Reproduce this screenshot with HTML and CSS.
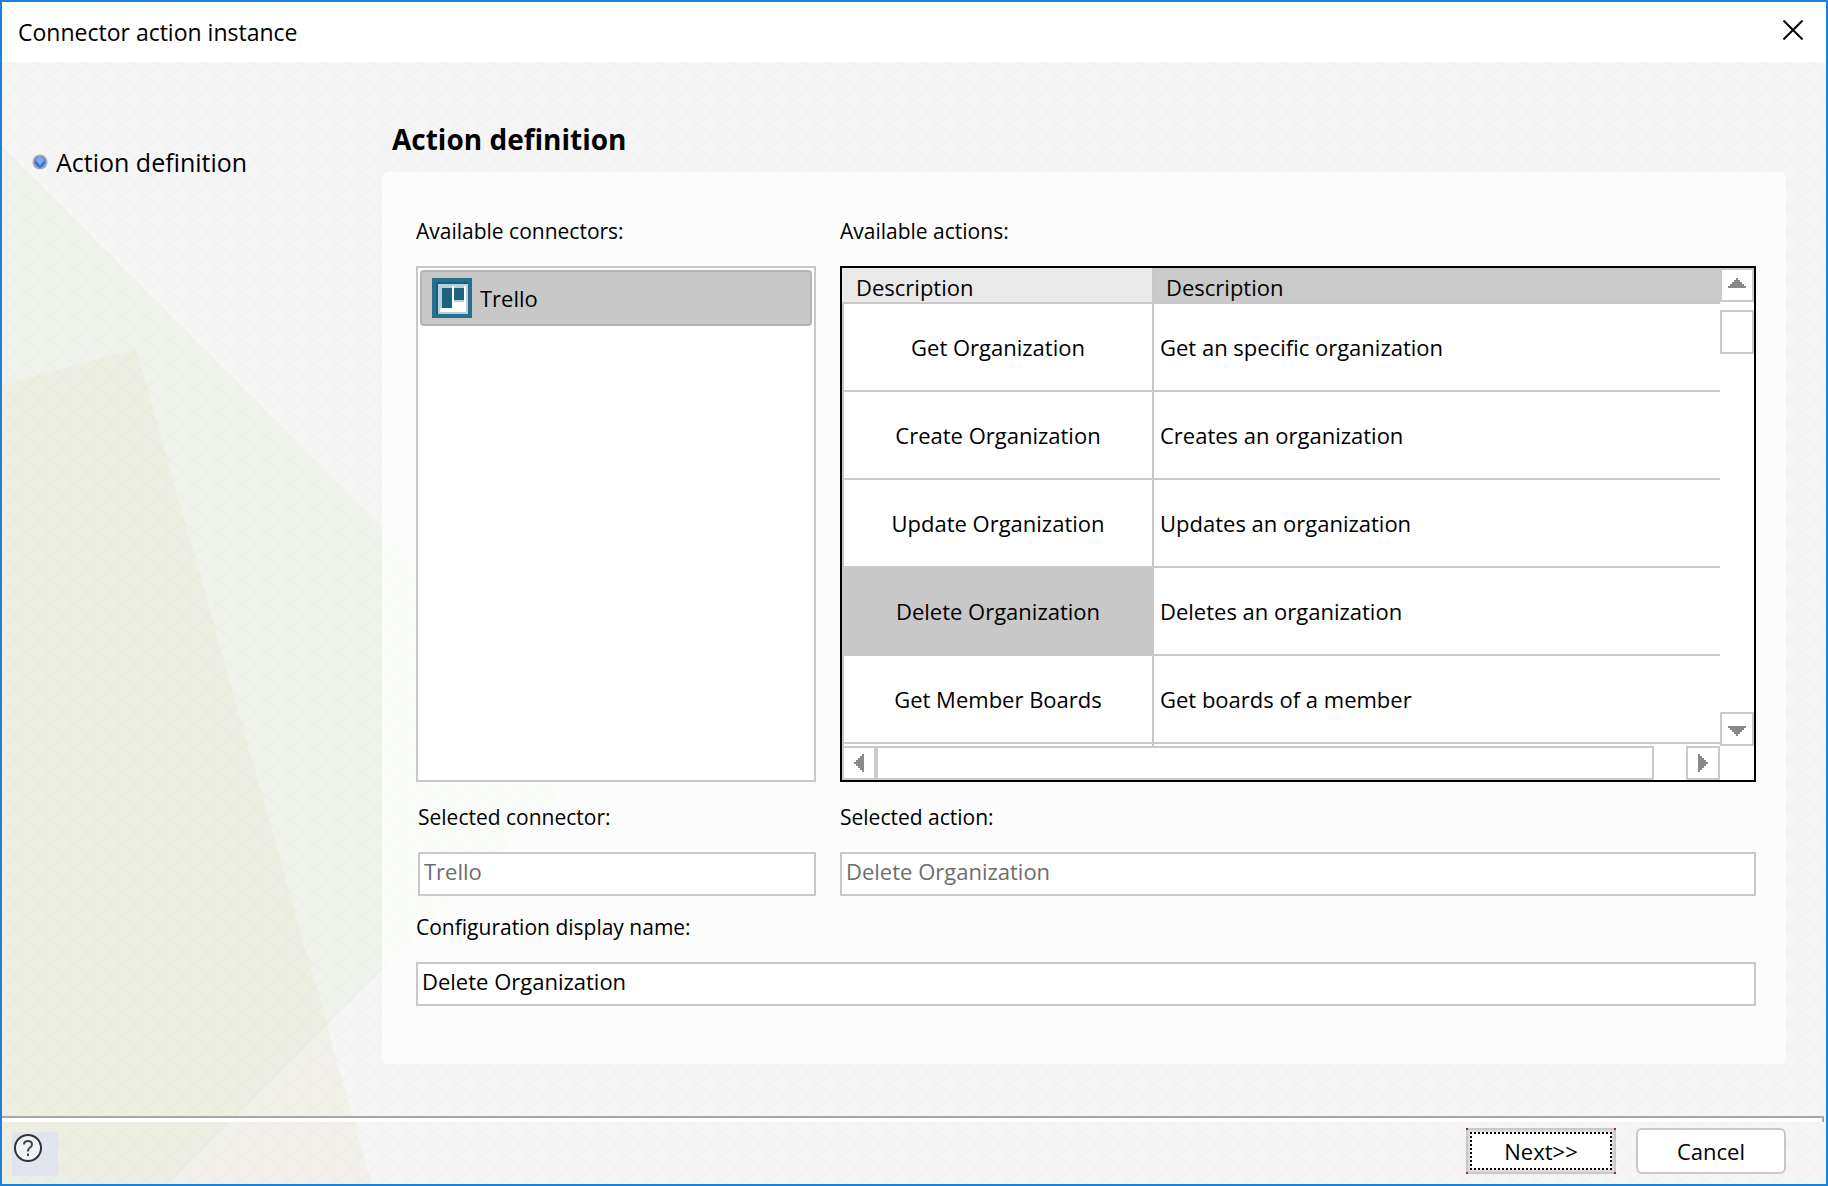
FILE: index.html
```html
<!DOCTYPE html>
<html lang="en">
<head>
<meta charset="utf-8">
<title>Connector action instance</title>
<link rel="stylesheet" href="styles.css">
</head>
<body>
<div class="dialog" role="dialog" aria-labelledby="dialog-title">
  <header class="titlebar">
    <h1 class="titlebar-text" id="dialog-title">Connector action instance</h1>
    <button class="close" type="button" aria-label="Close">
      <svg width="20" height="20" viewBox="0 0 20 20"><path d="M0.5 0.5 19.5 19.5M19.5 0.5 0.5 19.5" stroke="#000" stroke-width="2" fill="none"/></svg>
    </button>
  </header>

  <div class="workspace">
    <svg class="backdrop" aria-hidden="true">
      <defs>
        <pattern id="lattice" x="12" y="2" width="24" height="24" patternUnits="userSpaceOnUse">
          <path d="M0 0 24 24M24 0 0 24" stroke="#000" stroke-opacity="0.012" stroke-width="2" fill="none"/>
        </pattern>
      </defs>
      <polygon points="0,85 600,688 0,1288" fill="#eff3eb"/>
      <polygon points="0,323 134,287 398,1222 0,1222" fill="#e0e3b8" fill-opacity="0.2"/>
      <rect width="100%" height="100%" fill="url(#lattice)"/>
    </svg>

    <div class="content">
      <nav class="steps" aria-label="Steps">
        <ol class="step-list">
          <li class="step" aria-current="step">
            <svg width="16" height="16" viewBox="0 0 16 16" aria-hidden="true">
              <circle cx="8" cy="8" r="7.500" fill="#a3a7ae"/>
              <circle cx="8" cy="8" r="5.500" fill="#5b86cc"/>
              <path d="M2 8h12L8 14z" fill="#1f74d6"/>
              <path d="M8 2 12 6 8 12 4 6z" fill="#86a6ee"/>
            </svg>
            <span>Action definition</span>
          </li>
        </ol>
      </nav>

      <main class="main">
        <h2 class="heading">Action definition</h2>
        <form class="panel" id="action-form">
          <section class="field">
            <h3 class="label" id="connectors-label">Available connectors:</h3>
            <ul class="connector-list" role="listbox" aria-labelledby="connectors-label">
              <li class="connector" role="option" aria-selected="true">
                <svg width="40" height="40" viewBox="0 0 40 40" aria-hidden="true">
                  <rect width="40" height="40" fill="#266f8f"/>
                  <rect x="4" y="4" width="32" height="32" fill="#175f80"/>
                  <rect x="6" y="6" width="30" height="30" fill="#b9d0da"/>
                  <rect x="8" y="8" width="26" height="26" fill="#fff"/>
                  <rect x="8" y="8" width="12" height="22" fill="#b9d0da"/>
                  <rect x="10" y="10" width="10" height="20" fill="#1b6283"/>
                  <rect x="22" y="8" width="10" height="16" fill="#b9d0da"/>
                  <rect x="22" y="10" width="10" height="12" fill="#1b6283"/>
                </svg>
                <span>Trello</span>
              </li>
            </ul>
          </section>

          <section class="field">
            <h3 class="label" id="actions-label">Available actions:</h3>
            <div class="grid-box">
              <div class="table-view">
                <table class="actions" aria-labelledby="actions-label">
                  <thead>
                    <tr><th class="name-col" scope="col">Description</th><th class="sorted" scope="col">Description</th></tr>
                  </thead>
                  <tbody>
                    <tr><td>Get Organization</td><td>Get an specific organization</td></tr>
                    <tr><td>Create Organization</td><td>Creates an organization</td></tr>
                    <tr><td>Update Organization</td><td>Updates an organization</td></tr>
                    <tr><td class="selected">Delete Organization</td><td>Deletes an organization</td></tr>
                    <tr><td>Get Member Boards</td><td>Get boards of a member</td></tr>
                    <tr><td></td><td></td></tr>
                  </tbody>
                </table>
              </div>
              <div class="scroll-v">
                <button class="scroll-button scroll-up" type="button" aria-label="Scroll up">
                  <svg width="18" height="10"><path d="M8 0h2v2h2v2h2v2h2v2h2v2H0V8h2V6h2V4h2V2h2z"/></svg>
                </button>
                <div class="thumb-v"></div>
                <button class="scroll-button scroll-down" type="button" aria-label="Scroll down">
                  <svg width="18" height="10"><path d="M8 10h2V8h2V6h2V4h2V2h2V0H0v2h2v2h2v2h2v2h2z"/></svg>
                </button>
              </div>
              <div class="scroll-h">
                <button class="scroll-button" type="button" aria-label="Scroll left">
                  <svg width="10" height="18"><path d="M0 8v2h2v2h2v2h2v2h2v2h2V0H8v2H6v2H4v2H2v2z"/></svg>
                </button>
                <div class="thumb-h"></div>
                <button class="scroll-button" type="button" aria-label="Scroll right">
                  <svg width="10" height="18"><path d="M10 8v2H8v2H6v2H4v2H2v2H0V0h2v2h2v2h2v2h2v2z"/></svg>
                </button>
              </div>
            </div>
          </section>

          <div class="field field-inset">
            <label class="label" for="selected-connector">Selected connector:</label>
            <input class="input" id="selected-connector" type="text" value="Trello" disabled>
          </div>
          <div class="field">
            <label class="label" for="selected-action">Selected action:</label>
            <input class="input" id="selected-action" type="text" value="Delete Organization" disabled>
          </div>
          <div class="field field-wide">
            <label class="label" for="display-name">Configuration display name:</label>
            <input class="input" id="display-name" type="text" value="Delete Organization">
          </div>
        </form>
      </main>
    </div>

    <footer class="footer">
      <button class="help" type="button" aria-label="Help">
        <svg width="30" height="30" viewBox="0 0 30 30">
          <circle cx="15" cy="15" r="13" fill="#fff" fill-opacity="0.5" stroke="#333" stroke-width="2"/>
          <path d="M11 11.500Q11 8 15 8t4 3.500Q19 13.500 16.500 15 15 16 15 18.500" stroke="#444" stroke-width="2" fill="none"/>
          <path d="M14 20.500h2v2.500h-2z" fill="#444"/>
        </svg>
      </button>
      <div class="actions-bar">
        <button class="button button-focused" type="submit" form="action-form"><span class="focus-ring">Next&gt;&gt;</span></button>
        <button class="button" type="button">Cancel</button>
      </div>
    </footer>
  </div>
</div>
</body>
</html>
```
FILE: styles.css
```css
* {
  box-sizing: border-box;
}

body {
  margin: 0;
  font-family: "Open Sans", "Noto Sans", sans-serif;
  font-size: 22px;
  line-height: 30px;
  color: #000;
}

button,
input {
  font: inherit;
  color: inherit;
}

h1, h2, h3, ol, ul {
  margin: 0;
  padding: 0;
  font-weight: 400;
  list-style: none;
}

.dialog {
  display: flex;
  flex-direction: column;
  min-height: 100vh;
  border: 2px solid #1a82d8;
  background: #f6f6f6;
}

.titlebar {
  display: flex;
  align-items: center;
  justify-content: space-between;
  height: 60px;
  padding: 0 15px 0 16px;
  background: #fff;
}

.titlebar-text {
  font-size: 23px;
}

.close {
  display: flex;
  padding: 6px 8px 10px;
  border: 0;
  background: none;
}

.workspace {
  position: relative;
  display: flex;
  flex: 1;
  flex-direction: column;
}

.backdrop {
  position: absolute;
  inset: 0;
  width: 100%;
  height: 100%;
}

.content {
  position: relative;
  display: flex;
  flex: 1;
}

.steps {
  width: 380px;
  flex: none;
  padding: 84px 0 0 30px;
}

.step {
  display: flex;
  align-items: center;
  gap: 8px;
  font-size: 25px;
  line-height: 32px;
}

.main {
  display: flex;
  flex: 1;
  flex-direction: column;
  gap: 15px;
  padding: 59px 40px 52px 0;
}

.heading {
  padding-left: 10px;
  font-size: 28px;
  line-height: 36px;
  font-weight: 700;
}

.panel {
  display: grid;
  flex: 1;
  grid-template-columns: 400fr 916fr;
  grid-template-rows: 1fr auto auto;
  column-gap: 24px;
  row-gap: 20px;
  padding: 44px 30px 58px 34px;
  border-radius: 6px;
  background: rgba(255, 255, 255, 0.7);
}

.field {
  display: flex;
  flex-direction: column;
  gap: 20px;
  min-width: 0;
}

.field-inset {
  padding-left: 2px;
}

.field-wide {
  grid-column: 1 / -1;
  margin-top: -4px;
}

.label {
  font-size: 21px;
}

.connector-list {
  flex: 1;
  padding: 2px;
  border: 2px solid #c8c8c8;
  background: #fff;
}

.connector {
  display: flex;
  align-items: center;
  gap: 8px;
  height: 56px;
  padding: 0 10px;
  border: 2px solid #b4b4b4;
  border-radius: 4px;
  background: #c8c8c8;
}

.grid-box {
  display: grid;
  flex: 1;
  grid-template-columns: 1fr 34px;
  grid-template-rows: 1fr 34px;
  border: 2px solid #000;
  background: #fff;
}

.table-view {
  overflow: hidden;
}

.actions {
  width: 100%;
  border-spacing: 0;
  table-layout: fixed;
}

.actions th {
  height: 36px;
  padding: 4px 12px 0;
  border-bottom: 2px solid #c8c8c8;
  background: #e9e9e9;
  font-weight: 400;
  text-align: left;
}

.actions .name-col {
  width: 312px;
  padding-left: 14px;
  border-right: 2px solid #c8c8c8;
}

.actions .sorted {
  background: #cacaca;
}

.actions td {
  height: 88px;
  padding: 0 6px;
  border-bottom: 2px solid #c8c8c8;
}

.actions td:first-child {
  border-right: 2px solid #c8c8c8;
  border-left: 2px solid #c8c8c8;
  text-align: center;
}

.actions tr:last-child td {
  height: 2px;
  border-bottom: 0;
}

.actions .selected {
  background: #c8c8c8;
}

.scroll-v {
  display: flex;
  flex-direction: column;
}

.scroll-h {
  display: flex;
}

.scroll-button {
  display: flex;
  flex: none;
  align-items: center;
  justify-content: center;
  width: 34px;
  height: 34px;
  padding: 0;
  border: 2px solid #cacaca;
  background: #fff;
  fill: #888;
}

.scroll-up {
  padding-bottom: 4px;
}

.scroll-down {
  padding-top: 4px;
}

.thumb-v {
  height: 44px;
  margin: 8px 0 auto;
  border: 2px solid #cacaca;
}

.thumb-h {
  flex: 1;
  margin-right: 32px;
  border: 2px solid #cacaca;
}

.input {
  width: 100%;
  height: 44px;
  padding: 0 4px 6px;
  border: 2px solid #c8c8c8;
  background: #fff;
}

.input:disabled {
  color: #6d6d6d;
}

.footer {
  position: relative;
  display: flex;
  align-items: flex-start;
  justify-content: space-between;
  height: 68px;
  padding: 8px 40px 0 10px;
}

.footer::before {
  content: "";
  position: absolute;
  top: 0;
  left: 0;
  right: 2px;
  height: 4px;
  border-top: 2px solid #a8a8a8;
  border-right: 2px solid #a8a8a8;
  background: #fff;
}

.help {
  display: flex;
  align-items: flex-start;
  width: 46px;
  height: 44px;
  margin-top: 8px;
  padding: 1px;
  border: 0;
  background: #e1e6ee;
}

.actions-bar {
  display: flex;
  gap: 20px;
  margin-top: 4px;
}

.button {
  width: 150px;
  height: 46px;
  padding: 0;
  border: 2px solid #c8c8c8;
  border-radius: 6px;
  background: #fff;
}

.button-focused {
  position: relative;
  padding: 2px;
  border-radius: 0;
  background:
    linear-gradient(#fff, #fff) content-box,
    #dcdcdc;
}

/* Red marks on the four corners of the default button */
.button-focused::before {
  content: "";
  position: absolute;
  inset: -2px;
  background:
    linear-gradient(#9c2a2a, #9c2a2a) 0 0 / 2px 2px,
    linear-gradient(#9c2a2a, #9c2a2a) 100% 0 / 2px 2px,
    linear-gradient(#9c2a2a, #9c2a2a) 0 100% / 2px 2px,
    linear-gradient(#9c2a2a, #9c2a2a) 100% 100% / 2px 2px;
  background-repeat: no-repeat;
}

.focus-ring {
  display: flex;
  align-items: center;
  justify-content: center;
  height: 100%;
  border: 2px dotted #000;
}
```
